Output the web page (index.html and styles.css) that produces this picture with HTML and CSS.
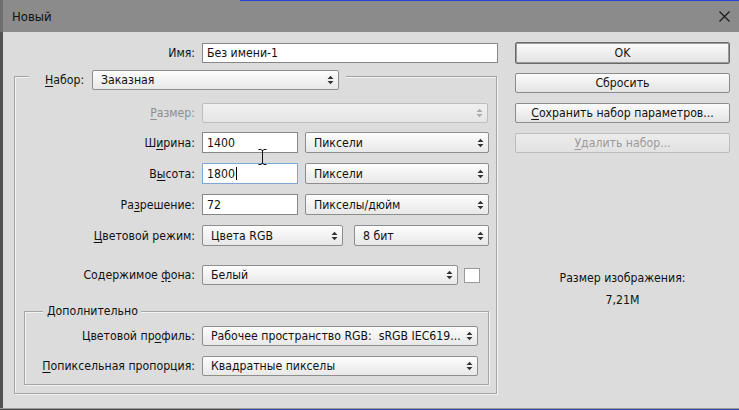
FILE: index.html
```html
<!DOCTYPE html>
<html>
<head>
<meta charset="utf-8">
<link rel="stylesheet" href="styles.css">
</head>
<body>
<div class="window">
  <div class="titlebar">
    <span class="title">Новый</span>
    <svg class="close" width="11" height="11" viewBox="0 0 11 11"><path d="M0.5 0.5 L10.5 10.5 M10.5 0.5 L0.5 10.5" stroke="#1a1a1a" stroke-width="1.2" fill="none"/></svg>
  </div>
  <div class="content">
    <div class="left">
      <div class="row name-row">
        <span class="label lw-name">Имя:</span>
        <div class="input w-name">Без имени-1</div>
      </div>

      <div class="group outer">
        <div class="group-head">
          <span class="head-label"><u>Н</u>абор:</span>
          <div class="select w-preset"><span>Заказная</span><svg class="arrow" width="7" height="10" viewBox="0 0 7 10"><path d="M0.5 4 L3.5 0.8 L6.5 4 Z M0.5 6 L3.5 9.2 L6.5 6 Z" fill="#333"/></svg></div>
        </div>

        <div class="row r-size">
          <span class="label lw-outer disabled-text"><u>Р</u>азмер:</span>
          <div class="select disabled w-size"><span></span><svg class="arrow" width="7" height="10" viewBox="0 0 7 10"><path d="M0.5 4 L3.5 0.8 L6.5 4 Z M0.5 6 L3.5 9.2 L6.5 6 Z" fill="#a9a9a9"/></svg></div>
        </div>

        <div class="row r-gap10 r-first">
          <span class="label lw-outer">Ш<u>и</u>рина:</span>
          <div class="input w-num">1400</div>
          <div class="select w-unit"><span>Пиксели</span><svg class="arrow" width="7" height="10" viewBox="0 0 7 10"><path d="M0.5 4 L3.5 0.8 L6.5 4 Z M0.5 6 L3.5 9.2 L6.5 6 Z" fill="#333"/></svg></div>
        </div>

        <div class="row r-gap10">
          <span class="label lw-outer">В<u>ы</u>сота:</span>
          <div class="input w-num focused">1800<span class="caret"></span></div>
          <div class="select w-unit"><span>Пиксели</span><svg class="arrow" width="7" height="10" viewBox="0 0 7 10"><path d="M0.5 4 L3.5 0.8 L6.5 4 Z M0.5 6 L3.5 9.2 L6.5 6 Z" fill="#333"/></svg></div>
        </div>

        <div class="row r-gap10">
          <span class="label lw-outer">Ра<u>з</u>решение:</span>
          <div class="input w-num">72</div>
          <div class="select w-unit"><span>Пикселы/дюйм</span><svg class="arrow" width="7" height="10" viewBox="0 0 7 10"><path d="M0.5 4 L3.5 0.8 L6.5 4 Z M0.5 6 L3.5 9.2 L6.5 6 Z" fill="#333"/></svg></div>
        </div>

        <div class="row r-gap10">
          <span class="label lw-outer"><u>Ц</u>ветовой режим:</span>
          <div class="select w-mode"><span>Цвета RGB</span><svg class="arrow" width="7" height="10" viewBox="0 0 7 10"><path d="M0.5 4 L3.5 0.8 L6.5 4 Z M0.5 6 L3.5 9.2 L6.5 6 Z" fill="#333"/></svg></div>
          <div class="select w-bits"><span>8 бит</span><svg class="arrow" width="7" height="10" viewBox="0 0 7 10"><path d="M0.5 4 L3.5 0.8 L6.5 4 Z M0.5 6 L3.5 9.2 L6.5 6 Z" fill="#333"/></svg></div>
        </div>

        <div class="row r-bg">
          <span class="label lw-outer">Содержимое <u>ф</u>она:</span>
          <div class="select short w-bg"><span>Белый</span><svg class="arrow" width="7" height="10" viewBox="0 0 7 10"><path d="M0.5 4 L3.5 0.8 L6.5 4 Z M0.5 6 L3.5 9.2 L6.5 6 Z" fill="#333"/></svg></div>
          <div class="swatch"></div>
        </div>

        <div class="group inner">
          <div class="group-head inner-head">Дополнительно</div>
          <div class="row r-profile">
            <span class="label lw-inner">Цветовой пр<u>о</u>филь:</span>
            <div class="select short w-profile"><span class="sel-text">Рабочее пространство RGB:&nbsp; sRGB IEC619...</span><svg class="arrow" width="7" height="10" viewBox="0 0 7 10"><path d="M0.5 4 L3.5 0.8 L6.5 4 Z M0.5 6 L3.5 9.2 L6.5 6 Z" fill="#333"/></svg></div>
          </div>
          <div class="row r-gap10">
            <span class="label lw-inner"><u>П</u>опиксельная пропорция:</span>
            <div class="select short w-profile"><span class="sel-text">Квадратные пикселы</span><svg class="arrow" width="7" height="10" viewBox="0 0 7 10"><path d="M0.5 4 L3.5 0.8 L6.5 4 Z M0.5 6 L3.5 9.2 L6.5 6 Z" fill="#333"/></svg></div>
          </div>
        </div>
      </div>
    </div>

    <div class="right">
      <div class="btn default">OK</div>
      <div class="btn b-reset">Сбросить</div>
      <div class="btn b-next"><u>С</u>охранить набор параметров...</div>
      <div class="btn b-next disabled"><u>У</u>далить набор...</div>
      <div class="size-info">
        <div>Размер изображения:</div>
        <div>7,21M</div>
      </div>
    </div>
  </div>
  <div class="footer"></div>

  <svg class="ibeam" width="9" height="16" viewBox="0 0 9 16"><path d="M0.5 0.5 H3.5 M5.5 0.5 H8.5 M3.5 1.5 H5.5 M4.5 1.5 V14.5 M3.5 14.5 H5.5 M0.5 15.5 H3.5 M5.5 15.5 H8.5" stroke="#111" stroke-width="1" fill="none"/></svg>
</div>
</body>
</html>
```

FILE: styles.css
```css
* { box-sizing: border-box; }
html, body { margin: 0; padding: 0; }
body {
  width: 739px;
  height: 410px;
  overflow: hidden;
  background: #dcdcdc;
  font-family: "DejaVu Sans Condensed", "DejaVu Sans", sans-serif;
  font-size: 12.2px;
  color: #111;
}
u { text-decoration: underline; text-underline-offset: 2px; }

.window {
  position: relative;
  width: 739px;
  height: 410px;
  display: flex;
  flex-direction: column;
}

.titlebar {
  height: 32px;
  flex: none;
  background-color: #8b8b8b;
  background-image: linear-gradient(to right, transparent 237px, #2540d8 237px);
  background-size: 100% 1px;
  background-repeat: no-repeat;
  background-position: top left;
  border-left: 3px solid #6e6e6e;
  display: flex;
  align-items: center;
  justify-content: space-between;
  padding: 0 9px 0 9px;
}
.title { font-size: 13px; color: #111; }
.close { display: block; }

.content {
  flex: 1;
  display: flex;
  border-left: 3px solid #525252;
  background: #dcdcdc;
}

.footer {
  height: 2px;
  flex: none;
  border-top: 1px solid #9c9c9c;
  background: linear-gradient(to right, #4a4a4a 240px, #2d4fae 240px);
}

.left {
  width: 484px;
  margin-left: 11px;
  padding-top: 11px;
  display: flex;
  flex-direction: column;
  align-items: flex-start;
}

.row {
  display: flex;
  align-items: center;
  gap: 7px;
}
.label { text-align: right; white-space: nowrap; }
.lw-name { width: 181px; }
.lw-outer { width: 180px; }
.lw-inner { width: 170px; }
.disabled-text { color: #8e8e8e; }

.input {
  height: 21px;
  background: #fff;
  border: 1px solid #878787;
  display: flex;
  align-items: center;
  padding-left: 4px;
  white-space: nowrap;
}
.input.focused { border-color: #7fa6d6; }
.caret {
  display: inline-block;
  width: 1px;
  height: 13px;
  background: #000;
  margin-left: 1px;
}
.w-name { width: 296px; height: 20px; }
.w-num { width: 96px; }

.select {
  height: 21px;
  border: 1px solid #8e8e8e;
  border-radius: 2px;
  background: linear-gradient(#fdfdfd, #e8e8e8);
  display: flex;
  align-items: center;
  justify-content: space-between;
  padding: 0 4px 0 8px;
  white-space: nowrap;
}
.sel-text { overflow: hidden; min-width: 0; }
.select.short { height: 20px; }
.select.disabled {
  border-color: #bdbdbd;
  background: linear-gradient(#f0f0f0, #e5e5e5);
  height: 20px;
}
.arrow { display: block; flex: none; margin-left: 4px; }

.w-preset { width: 247px; height: 20px; }
.w-size { width: 286px; }
.w-unit { width: 184px; }
.w-mode { width: 141px; }
.w-bits { width: 135px; margin-left: 4px; }
.w-bg { width: 256px; }
.w-profile { width: 276px; }

.swatch {
  width: 16px;
  height: 15px;
  background: #fff;
  border: 1px solid #9a9a9a;
  margin-left: -1px;
}

.group {
  display: flex;
  flex-direction: column;
  align-items: flex-start;
  border: 1px solid #a4a4a4;
  box-shadow: inset 1px 1px 0 #f3f3f3, 1px 1px 0 #f3f3f3;
}
.outer {
  width: 483px;
  margin-top: 13px;
}
.group-head {
  display: flex;
  align-items: center;
  margin: -7px 0 0 14px;
  padding: 0 7px 0 16px;
  background: #dcdcdc;
}
.head-label { width: 47px; }

.r-size { margin-top: 13px; }
.r-first { margin-top: 9px !important; }
.r-gap10 { margin-top: 10px; }
.r-bg { margin-top: 19px; }

.inner {
  width: 465px;
  margin: 26px 0 8px 9px;
  padding-bottom: 8px;
}
.inner-head {
  height: 14px;
  line-height: 14px;
  margin: -8px 0 0 18px;
  padding: 0 3px 0 4px;
}
.r-profile { margin-top: 8px; }

.right {
  width: 215px;
  margin-left: 17px;
  padding-top: 10px;
  display: flex;
  flex-direction: column;
}
.btn {
  height: 20px;
  border: 1px solid #8c8c8c;
  border-radius: 2px;
  background: linear-gradient(#fbfbfb, #e3e3e3);
  display: flex;
  align-items: center;
  justify-content: center;
  white-space: nowrap;
}
.btn.default {
  height: 22px;
  border: 1px solid #6a6a6a;
  box-shadow: inset 0 0 0 1px #9a9a9a;
}
.b-reset { margin-top: 9px; }
.b-next { margin-top: 10px; }
.btn.disabled {
  border-color: #bcbcbc;
  background: linear-gradient(#ececec, #e2e2e2);
  color: #9b9b9b;
}
.size-info {
  margin-top: 114px;
  text-align: center;
  line-height: 22px;
}

.ibeam {
  position: absolute;
  left: 258px;
  top: 149px;
}
```
